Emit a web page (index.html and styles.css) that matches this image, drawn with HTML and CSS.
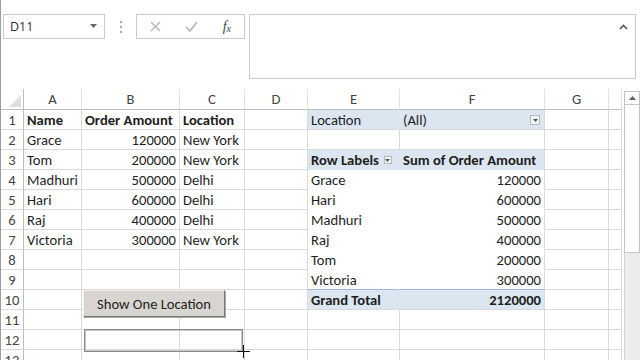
FILE: index.html
```html
<!DOCTYPE html>
<html lang="en">
<head>
    <meta charset="UTF-8">
    <title>Pivot - Show One Location</title>
    <link rel="stylesheet" href="styles.css">
</head>
<body>
    <div class="app">
        <!-- name box + formula bar -->
        <div class="formula-row">
            <div class="name-box">
                <span>D11</span>
                <svg class="nb-arrow" width="7" height="4" viewBox="0 0 7 4"><path d="M0 0h7L3.5 4z" fill="#666"/></svg>
            </div>
            <div class="grip"><i></i><i></i><i></i></div>
            <div class="fx-box">
                <svg width="11" height="11" viewBox="0 0 11 11"><path d="M1 1l9 9M10 1l-9 9" stroke="#b4b4b4" stroke-width="1.4"/></svg>
                <svg width="13" height="11" viewBox="0 0 13 11"><path d="M1 6l4 4 7-9" stroke="#b4b4b4" stroke-width="1.6" fill="none"/></svg>
                <span class="fx">f<sub>x</sub></span>
            </div>
            <div class="formula-input">
                <svg class="collapse" width="9" height="6" viewBox="0 0 9 6"><path d="M1 5l3.5-3.5L8 5" stroke="#555" stroke-width="1.6" fill="none"/></svg>
            </div>
        </div>

        <div class="sheet-wrap">
            <table class="sheet">
                <colgroup>
                    <col style="width:23px"><col style="width:58px"><col style="width:98px"><col style="width:65px">
                    <col style="width:63px"><col style="width:92px"><col style="width:145px"><col style="width:64px"><col style="width:13px">
                </colgroup>
                <tr class="col-heads">
                    <th class="corner"><svg width="12" height="12" viewBox="0 0 12 12"><path d="M12 0v12H0z" fill="#dedede"/></svg></th>
                    <th>A</th><th>B</th><th>C</th><th>D</th><th>E</th><th>F</th><th>G</th><th></th>
                </tr>
                <tr>
                    <th>1</th><td class="b">Name</td><td class="b">Order Amount</td><td class="b">Location</td><td></td>
                    <td class="pv pv-l">Location</td>
                    <td class="pv"><div class="field"><span>(All)</span><span class="dd"><svg width="5" height="3" viewBox="0 0 5 3"><path d="M0 0h5L2.5 3z" fill="#555"/></svg></span></div></td>
                    <td></td><td></td>
                </tr>
                <tr><th>2</th><td>Grace</td><td class="r">120000</td><td>New York</td><td></td><td></td><td></td><td></td><td></td></tr>
                <tr>
                    <th>3</th><td>Tom</td><td class="r">200000</td><td>New York</td><td></td>
                    <td class="pv pv-l pv-h b"><div class="field left"><span>Row Labels</span><span class="dd sm"><svg width="5" height="3" viewBox="0 0 5 3"><path d="M0 0h5L2.5 3z" fill="#555"/></svg></span></div></td>
                    <td class="pv pv-h b">Sum of Order Amount</td>
                    <td></td><td></td>
                </tr>
                <tr><th>4</th><td>Madhuri</td><td class="r">500000</td><td>Delhi</td><td></td><td class="pb pb-l">Grace</td><td class="pb r">120000</td><td></td><td></td></tr>
                <tr><th>5</th><td>Hari</td><td class="r">600000</td><td>Delhi</td><td></td><td class="pb pb-l">Hari</td><td class="pb r">600000</td><td></td><td></td></tr>
                <tr><th>6</th><td>Raj</td><td class="r">400000</td><td>Delhi</td><td></td><td class="pb pb-l">Madhuri</td><td class="pb r">500000</td><td></td><td></td></tr>
                <tr><th>7</th><td>Victoria</td><td class="r">300000</td><td>New York</td><td></td><td class="pb pb-l">Raj</td><td class="pb r">400000</td><td></td><td></td></tr>
                <tr><th>8</th><td></td><td></td><td></td><td></td><td class="pb pb-l">Tom</td><td class="pb r">200000</td><td></td><td></td></tr>
                <tr><th>9</th><td></td><td></td><td></td><td></td><td class="pb pb-l pb-last">Victoria</td><td class="pb r pb-last">300000</td><td></td><td></td></tr>
                <tr><th>10</th><td></td><td></td><td></td><td></td><td class="pv pv-l b">Grand Total</td><td class="pv r b">2120000</td><td></td><td></td></tr>
                <tr><th>11</th><td></td><td></td><td></td><td></td><td></td><td></td><td></td><td></td></tr>
                <tr><th>12</th><td></td><td></td><td></td><td></td><td></td><td></td><td></td><td></td></tr>
                <tr><th>13</th><td></td><td></td><td></td><td></td><td></td><td></td><td></td><td></td></tr>
            </table>

            <div class="vscroll">
                <div class="vs-up"><svg width="7" height="4" viewBox="0 0 7 4"><path d="M0 4h7L3.5 0z" fill="#606060"/></svg></div>
                <div class="vs-thumb"></div>
                <div class="vs-track"></div>
            </div>

            <!-- form control button + the one being drawn -->
            <button class="form-btn">Show One Location</button>
            <div class="drag-rect"></div>
            <svg class="cross" width="13" height="13" viewBox="0 0 13 13"><path d="M6.5 0v13M0 6.5h13" stroke="#111" stroke-width="1"/></svg>
        </div>
    </div>
</body>
</html>
```

FILE: styles.css
```css
html, body {
    margin: 0;
    padding: 0;
    background: #fff;
}
.app {
    width: 639px;
    height: 360px;
    border-left: 1px solid #9c9c9c;
    overflow: hidden;
    font-family: Carlito, Calibri, Lato, sans-serif;
    color: #1e1e1e;
}

/* ---- formula bar ---- */
.formula-row {
    display: flex;
    align-items: flex-start;
    height: 89px;
    padding-top: 14px;
    box-sizing: border-box;
}
.name-box {
    margin-left: 2px;
    width: 102px;
    height: 25px;
    box-sizing: border-box;
    border: 1px solid #cacaca;
    display: flex;
    align-items: center;
    justify-content: space-between;
    padding: 0 7px 0 6px;
    font-family: "Open Sans", sans-serif;
    font-size: 12.5px;
    color: #333;
}
.nb-arrow {
    margin-top: -2px;
}
.grip {
    width: 31px;
    height: 25px;
    display: flex;
    flex-direction: column;
    align-items: center;
    justify-content: center;
    gap: 3px;
}
.grip i {
    width: 2px;
    height: 2px;
    background: #a8a8a8;
}
.fx-box {
    width: 109px;
    height: 25px;
    box-sizing: border-box;
    border: 1px solid #cacaca;
    display: flex;
    align-items: center;
    padding: 0 13px 0 13px;
    justify-content: space-between;
}
.fx {
    font-family: "Liberation Serif", serif;
    font-style: italic;
    font-size: 14px;
    color: #444;
}
.fx sub {
    font-size: 10px;
    vertical-align: -1px;
}
.formula-input {
    margin-left: 4px;
    width: 387px;
    height: 65px;
    box-sizing: border-box;
    border: 1px solid #cacaca;
    display: flex;
    justify-content: flex-end;
    padding: 9px 7px 0 0;
}
.collapse {
    display: block;
}

/* ---- grid ---- */
.sheet-wrap {
    position: relative;
    display: flex;
    align-items: flex-start;
    height: 271px;
    overflow: hidden;
}
.sheet {
    table-layout: fixed;
    width: 621px;
    border-collapse: separate;
    border-spacing: 0;
    font-size: 14.6px;
    flex: none;
}
.sheet tr {
    height: 20px;
}
.sheet tr.col-heads {
    height: 21px;
}
.sheet th, .sheet td {
    padding: 0 3px;
    line-height: 18px;
    vertical-align: bottom;
    white-space: nowrap;
    overflow: hidden;
    border-right: 1px solid #dadada;
    border-bottom: 1px solid #dadada;
    text-align: left;
}
.sheet th {
    font-weight: normal;
    color: #444;
    text-align: center;
    padding: 0;
}
.col-heads th {
    border-bottom-color: #bdbdbd;
    border-right-color: #e2e2e2;
    vertical-align: middle;
}
.sheet tr > th:first-child {
    border-right-color: #bdbdbd;
}
.corner svg {
    display: block;
    margin: 3px 0 0 8px;
}
.sheet .r {
    text-align: right;
    padding-right: 3px;
}
.sheet .b {
    font-weight: bold;
}

/* pivot table */
.sheet .pv {
    background: #dce6f1;
}
.sheet .pv-l {
    border-right-color: #dce6f1;
}
.sheet .pv-h {
    border-bottom-color: #dce6f1;
}
.sheet .pb {
    border-bottom-color: #fff;
}
.sheet .pb-l {
    border-right-color: #fff;
}
.sheet .pb-last {
    border-bottom-color: #9fbbdc;
}
.field {
    display: flex;
    align-items: center;
    justify-content: space-between;
    padding-right: 1px;
}
.field.left {
    justify-content: flex-start;
    gap: 5px;
}
.dd {
    width: 10px;
    height: 10px;
    box-sizing: border-box;
    border: 1px solid #b8b8b8;
    background: #f4f4f4;
    display: flex;
    align-items: center;
    justify-content: center;
}
.dd.sm {
    width: 8px;
    height: 8px;
}

/* vertical scrollbar */
.vscroll {
    margin-left: 2px;
    width: 16px;
    height: 100%;
    display: flex;
    flex-direction: column;
    padding-top: 2px;
    box-sizing: border-box;
}
.vs-up {
    height: 14px;
    box-sizing: border-box;
    border: 1px solid #c4c4c4;
    display: flex;
    align-items: center;
    justify-content: center;
}
.vs-thumb {
    height: 148px;
    box-sizing: border-box;
    border: 1px solid #c4c4c4;
    border-top: none;
    background: #fff;
}
.vs-track {
    flex: 1;
    background: #ececec;
    border-left: 1px solid #d4d4d4;
}

/* floating controls */
.form-btn {
    position: absolute;
    left: 82px;
    top: 201px;
    width: 142px;
    height: 27px;
    padding: 0;
    background: #d8d5d0;
    border: 1px solid;
    border-color: #f2f1ee #7d7b78 #7d7b78 #f2f1ee;
    box-shadow: 1px 1px 0 #a7a5a1;
    font-family: Carlito, Calibri, Lato, sans-serif;
    font-size: 14.6px;
    color: #222;
}
.drag-rect {
    position: absolute;
    left: 83px;
    top: 240px;
    width: 159px;
    height: 23px;
    box-sizing: border-box;
    border: 1px solid #8a8a8a;
    box-shadow: inset 0 0 0 1px #c8c8c8;
}
.cross {
    position: absolute;
    left: 236px;
    top: 256px;
}
```
